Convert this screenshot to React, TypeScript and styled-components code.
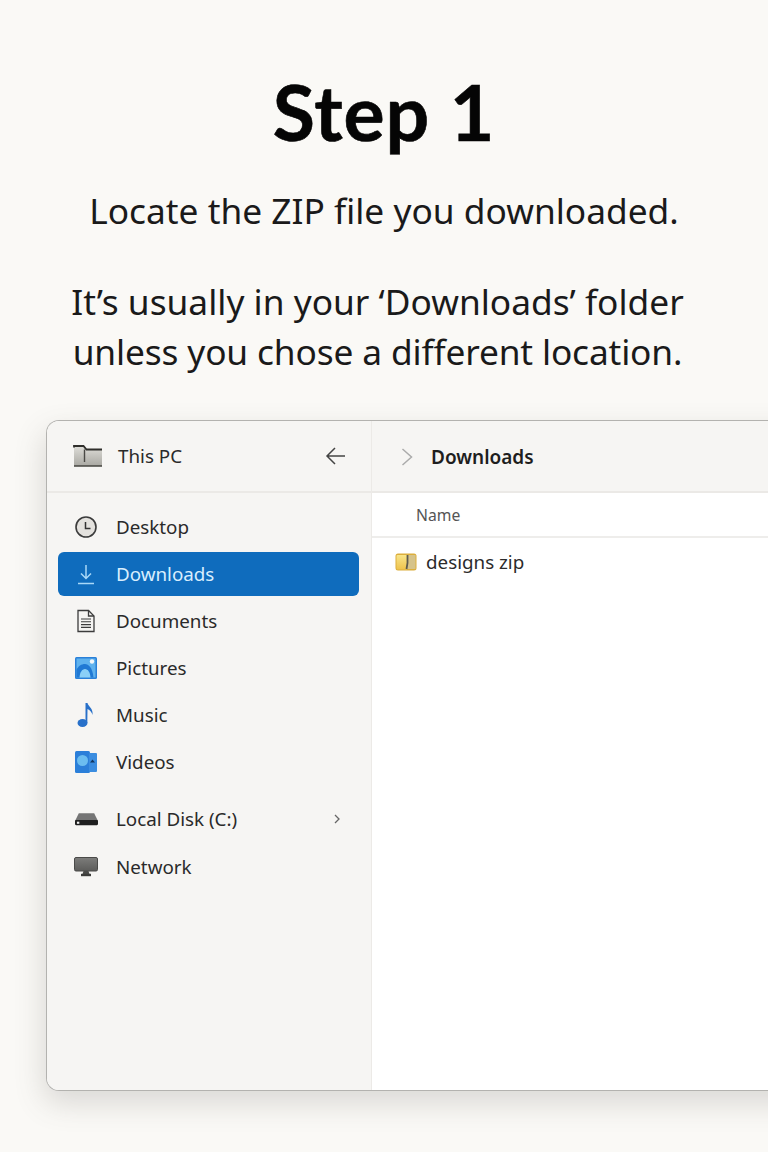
import React from 'react';
import styled, { createGlobalStyle } from 'styled-components';

const GlobalStyle = createGlobalStyle`
  html, body {
    margin: 0;
    padding: 0;
    background: #faf9f6;
  }
  #root {
    width: 768px;
    height: 1152px;
    overflow: hidden;
  }
`;

const Page = styled.div`
  width: 768px;
  height: 1152px;
  overflow: hidden;
  background: #faf9f6;
  font-family: 'Noto Sans', sans-serif;
  color: #1a1a1a;
  display: flex;
  flex-direction: column;
  align-items: center;
`;

const Title = styled.h1`
  margin: 66px 0 2px;
  font-family: Lato, 'Noto Sans', sans-serif;
  font-size: 77px;
  line-height: 90px;
  font-weight: 700;
  letter-spacing: 0.9px;
  color: #050505;
  -webkit-text-stroke: 0.6px #050505;
`;

const Lead = styled.p`
  margin: 27px 0 0;
  font-size: 35.3px;
  line-height: 50px;
  font-weight: 400;
  text-align: center;
`;

const Note = styled(Lead)`
  margin: 41px 13px 0 0;
`;

const NoteLine = styled.span<{ $tracking?: number }>`
  display: block;
  letter-spacing: ${({ $tracking }) => $tracking ?? 0}px;
`;

const Window = styled.div`
  align-self: flex-start;
  flex: none;
  box-sizing: border-box;
  width: 760px;
  height: 671px;
  margin: 44px 0 0 46px;
  display: grid;
  grid-template-columns: 325px 1fr;
  border: 1.5px solid #b3b2af;
  border-right: 0;
  border-radius: 13px 0 0 13px;
  background: #ffffff;
  box-shadow: -2px 12px 30px rgba(90, 84, 78, 0.2);
  overflow: hidden;
`;

const Sidebar = styled.aside`
  display: flex;
  flex-direction: column;
  background: #f6f5f3;
  border-right: 1px solid #eceae7;
`;

const SidebarHead = styled.div`
  box-sizing: border-box;
  height: 72px;
  display: flex;
  align-items: center;
  padding: 0 24px 0 26px;
  border-bottom: 2px solid #ebe9e6;
  font-size: 18.8px;
  color: #2a2a2a;
`;

const HeadLabel = styled.span`
  margin-left: 15px;
  flex: 1;
`;

const Nav = styled.nav`
  display: flex;
  flex-direction: column;
  padding: 11px 12px 0 11px;
`;

const NavRow = styled.div<{ $active?: boolean; $gap?: number }>`
  box-sizing: border-box;
  height: ${({ $active }) => ($active ? '44px' : '47px')};
  margin: ${({ $active }) => ($active ? '1px 0 2px' : '0')};
  margin-top: ${({ $gap }) => ($gap ? `${$gap}px` : undefined)};
  padding-bottom: ${({ $active }) => ($active ? '0' : '2px')};
  display: grid;
  grid-template-columns: 58px 1fr auto;
  align-items: center;
  padding-right: 18px;
  border-radius: 6px;
  font-size: 18.8px;
  color: ${({ $active }) => ($active ? '#d8eefe' : '#2a2a2a')};
  background: ${({ $active }) => ($active ? '#0f6cbd' : 'transparent')};
`;

const NavIcon = styled.span`
  display: flex;
  justify-content: center;
  padding-right: 2px;
`;

const Main = styled.section`
  display: flex;
  flex-direction: column;
`;

const PathBar = styled.div`
  box-sizing: border-box;
  height: 72px;
  display: flex;
  align-items: center;
  gap: 18px;
  padding: 1px 0 0 29px;
  background: #f6f5f3;
  border-bottom: 2px solid #ebe9e6;
`;

const PathText = styled.span`
  font-size: 19px;
  font-weight: 600;
  color: #1e1e1e;
`;

const ColumnHead = styled.div`
  box-sizing: border-box;
  height: 45px;
  display: flex;
  align-items: center;
  padding-left: 44px;
  border-bottom: 2px solid #eeedeb;
  font-size: 15.7px;
  color: #555555;
`;

const FileRow = styled.div`
  display: flex;
  align-items: center;
  gap: 9px;
  padding: 9px 0 0 23px;
  font-size: 18.8px;
  line-height: 30px;
  color: #2b2b2b;
`;

const FolderIcon = () => (
  <svg width="30" height="22" viewBox="0 0 30 22">
    <defs>
      <linearGradient id="fold" x1="0" y1="0" x2="0" y2="1">
        <stop offset="0" stopColor="#dcdbd6" />
        <stop offset="1" stopColor="#a9a8a2" />
      </linearGradient>
    </defs>
    <path d="M1 2h10l2 2.500h16V21H1z" fill="url(#fold)" />
    <path d="M1 2.500V1h9.500l3 3.500h15.500" fill="none" stroke="#2f2e2b" strokeWidth="1.800" />
    <path d="M11.500 4.500V17" stroke="#4a4945" strokeWidth="1.400" />
    <path d="M1 21h28" stroke="#45443f" strokeWidth="1.400" />
  </svg>
);

const BackIcon = () => (
  <svg width="22" height="20" viewBox="0 0 22 20" fill="none" stroke="#444" strokeWidth="1.500">
    <path d="M20 10H2M10 2l-8 8 8 8" />
  </svg>
);

const ClockIcon = () => (
  <svg width="24" height="24" viewBox="0 0 24 24" fill="none">
    <circle cx="12" cy="12" r="10" fill="#e4e2de" stroke="#3b3b3b" strokeWidth="1.600" />
    <path d="M11.500 7v6.500h5" stroke="#333" strokeWidth="1.500" />
  </svg>
);

const DownloadIcon = () => (
  <svg width="18" height="22" viewBox="0 0 18 22" fill="none" stroke="#a9d8f8" strokeWidth="1.500">
    <path d="M9 2v13M4 10.500l5 5 5-5M1 20.500h16" />
  </svg>
);

const DocumentIcon = () => (
  <svg width="20" height="24" viewBox="0 0 20 24" fill="#f5f4f2" stroke="#3c3c3c" strokeWidth="1.300">
    <path d="M2 1.500h10.500l5.500 5.500v15.500H2z" />
    <path d="M12.500 1.500V7H18" fill="none" />
    <path d="M5 10h10M5 12.800h10M5 15.600h10M5 18.400h10" fill="none" strokeWidth="1.100" />
  </svg>
);

const PicturesIcon = () => (
  <svg width="22" height="22" viewBox="0 0 22 22">
    <rect x="0" y="0" width="22" height="22" rx="1.500" fill="#2a80d8" />
    <rect x="1.500" y="1.500" width="19" height="19" fill="#5fb2ee" />
    <circle cx="17" cy="4.500" r="2.200" fill="#f3f7fa" />
    <path d="M1.500 13c1.500-4 5-6 8.500-6s7.500 3.500 8.500 13.500H1.500z" fill="#2079d4" />
    <path d="M4.500 20.500c.3-5 2.500-8.500 5.500-8.500s5.200 3.500 5.500 8.500z" fill="#8bd0f7" />
  </svg>
);

const MusicIcon = () => (
  <svg width="18" height="26" viewBox="0 0 18 26" fill="#2870c9">
    <ellipse cx="5.500" cy="21" rx="5" ry="4" />
    <path d="M8.500 1h2c.5 3.500 6 5 5 12-.5-2.500-2.500-5-5-6l-.2 14H8.500z" />
  </svg>
);

const VideosIcon = () => (
  <svg width="22" height="22" viewBox="0 0 22 22">
    <rect x="0" y="0" width="15" height="22" rx="1.500" fill="#2b7fd9" />
    <rect x="14" y="2" width="8" height="19" rx="1" fill="#3b8de0" />
    <circle cx="7.500" cy="9.500" r="5.500" fill="#6bbdf0" />
    <path d="M17.500 8.500l2.500 3h-5z" fill="#123660" />
  </svg>
);

const DiskIcon = () => (
  <svg width="23" height="14" viewBox="0 0 24 14">
    <path d="M4 1h16l4 8H0z" fill="#757575" />
    <rect x="0" y="8" width="24" height="5.500" rx="1.200" fill="#1f1f1f" />
    <rect x="2" y="9.800" width="2.500" height="2.200" fill="#f2f2f2" />
  </svg>
);

const NetworkIcon = () => (
  <svg width="24" height="20" viewBox="0 0 24 20">
    <defs>
      <linearGradient id="screen" x1="0" y1="0" x2="0" y2="1">
        <stop offset="0" stopColor="#7d7d7b" />
        <stop offset="1" stopColor="#5c5c5a" />
      </linearGradient>
    </defs>
    <rect x="0.500" y="0.500" width="23" height="13.500" rx="1.500" fill="url(#screen)" stroke="#4a4a48" />
    <path d="M9.500 14h5l1 3h-7z" fill="#4a4a48" />
    <rect x="7" y="16.800" width="10" height="2.400" fill="#3c3c3a" />
  </svg>
);

const SmallChevron = () => (
  <svg width="8" height="12" viewBox="0 0 8 12" fill="none" stroke="#666" strokeWidth="1.300">
    <path d="M2 2l4 4-4 4" />
  </svg>
);

const PathChevron = () => (
  <svg width="12" height="20" viewBox="0 0 12 20" fill="none" stroke="#ababab" strokeWidth="1.500">
    <path d="M1.500 2l9 8-9 8" />
  </svg>
);

const ZipIcon = () => (
  <svg width="22" height="18" viewBox="0 0 22 18">
    <defs>
      <linearGradient id="zip" x1="0" y1="0" x2="0" y2="1">
        <stop offset="0" stopColor="#f8e58a" />
        <stop offset="1" stopColor="#eec24c" />
      </linearGradient>
    </defs>
    <rect x="0.500" y="0.500" width="21" height="17" rx="2.500" fill="#dcae3c" />
    <rect x="1.500" y="2" width="11" height="14.500" rx="1" fill="url(#zip)" />
    <rect x="12" y="2" width="8.500" height="14" fill="#d6c38a" />
    <path d="M12.500 2v8l-1 6" stroke="#5d5a4d" strokeWidth="1.800" fill="none" />
  </svg>
);

const navItems = [
  { label: 'Desktop', icon: <ClockIcon /> },
  { label: 'Downloads', icon: <DownloadIcon />, active: true },
  { label: 'Documents', icon: <DocumentIcon /> },
  { label: 'Pictures', icon: <PicturesIcon /> },
  { label: 'Music', icon: <MusicIcon /> },
  { label: 'Videos', icon: <VideosIcon /> },
  { label: 'Local Disk (C:)', icon: <DiskIcon />, chevron: true, gap: 10 },
  { label: 'Network', icon: <NetworkIcon />, gap: 1 },
];

export default function App() {
  return (
    <Page>
      <GlobalStyle />
      <Title>Step 1</Title>
      <Lead>Locate the ZIP file you downloaded.</Lead>
      <Note>
        <NoteLine>It’s usually in your ‘Downloads’ folder</NoteLine>
        <NoteLine $tracking={-0.15}>unless you chose a different location.</NoteLine>
      </Note>
      <Window>
        <Sidebar>
          <SidebarHead>
            <FolderIcon />
            <HeadLabel>This PC</HeadLabel>
            <BackIcon />
          </SidebarHead>
          <Nav>
            {navItems.map((item) => (
              <NavRow key={item.label} $active={item.active} $gap={item.gap}>
                <NavIcon>{item.icon}</NavIcon>
                <span>{item.label}</span>
                {item.chevron && <SmallChevron />}
              </NavRow>
            ))}
          </Nav>
        </Sidebar>
        <Main>
          <PathBar>
            <PathChevron />
            <PathText>Downloads</PathText>
          </PathBar>
          <ColumnHead>Name</ColumnHead>
          <FileRow>
            <ZipIcon />
            designs zip
          </FileRow>
        </Main>
      </Window>
    </Page>
  );
}
